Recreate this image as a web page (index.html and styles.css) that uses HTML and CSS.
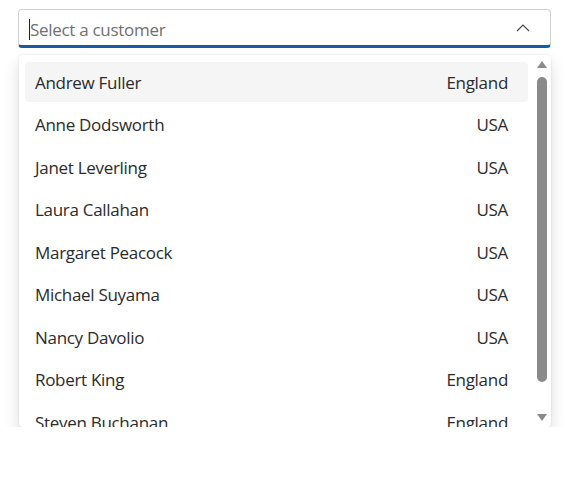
FILE: index.html
```html
<!DOCTYPE html>
<html lang="en">
<head>
  <meta charset="UTF-8" />
  <meta name="viewport" content="width=device-width, initial-scale=1.0" />
  <title>Customer picker</title>
  <link rel="stylesheet" href="styles.css">
</head>
<body>

<div class="combo">
  <div class="combo-input">
    <span class="caret"></span>
    <span class="placeholder">Select a customer</span>
    <svg class="chevron" width="14" height="8" viewBox="0 0 14 8">
      <path d="M1 7 L7 1 L13 7" fill="none" stroke="#444" stroke-width="1.1" />
    </svg>
  </div>

  <div class="popup">
    <ul class="list">
      <li class="item active"><span>Andrew Fuller</span><span>England</span></li>
      <li class="item"><span>Anne Dodsworth</span><span>USA</span></li>
      <li class="item"><span>Janet Leverling</span><span>USA</span></li>
      <li class="item"><span>Laura Callahan</span><span>USA</span></li>
      <li class="item"><span>Margaret Peacock</span><span>USA</span></li>
      <li class="item"><span>Michael Suyama</span><span>USA</span></li>
      <li class="item"><span>Nancy Davolio</span><span>USA</span></li>
      <li class="item"><span>Robert King</span><span>England</span></li>
      <li class="item"><span>Steven Buchanan</span><span>England</span></li>
    </ul>
    <div class="scrollbar">
      <span class="arrow up"></span>
      <span class="thumb"></span>
      <span class="arrow down"></span>
    </div>
  </div>
</div>

</body>
</html>
```

FILE: styles.css
```css
body {
  margin: 0;
  padding: 9px 26px 0 18px;
  background: #fff;
  font-family: 'Open Sans', 'Noto Sans', sans-serif;
  color: #2b2b2b;
}

.combo {
  width: 533px;
}

.combo-input {
  display: flex;
  align-items: center;
  height: 32px;
  padding: 3px 20px 0 10px;
  border: 1px solid #d1d1d1;
  border-bottom: 3px solid #115ea3;
  border-radius: 4px;
  background: #fff;
  box-sizing: content-box;
}

.caret {
  width: 1px;
  height: 21px;
  background: #242424;
}

.placeholder {
  flex: 1;
  font-size: 17px;
  color: #707070;
  letter-spacing: -0.3px;
}

.chevron {
  margin-top: -2px;
}

.popup {
  display: flex;
  height: 372px;
  margin: 7px 0 0 1px;
  background: #fff;
  border-radius: 4px;
  box-shadow: 0 0 2px rgba(0,0,0,0.12), 0 8px 16px rgba(0,0,0,0.14);
  overflow: hidden;
}

.list {
  flex: 1;
  margin: 0;
  padding: 7px 7px 0 6px;
  list-style: none;
  overflow: hidden;
}

.item {
  display: flex;
  justify-content: space-between;
  align-items: center;
  height: 40px;
  margin-bottom: 2.5px;
  padding: 0 20px 0 10px;
  border-radius: 4px;
  font-size: 17px;
  letter-spacing: -0.3px;
}

.item.active {
  background: #f5f5f5;
}

.scrollbar {
  display: flex;
  flex-direction: column;
  align-items: center;
  width: 14px;
  padding: 6px 2px 6px 0;
}

.arrow {
  width: 0;
  height: 0;
  border-left: 5px solid transparent;
  border-right: 5px solid transparent;
}

.arrow.up {
  border-bottom: 7px solid #8a8a8a;
}

.arrow.down {
  border-top: 7px solid #8a8a8a;
}

.thumb {
  width: 10px;
  height: 305px;
  margin: 9px 0 auto;
  border-radius: 5px;
  background: #8a8a8a;
}
```
